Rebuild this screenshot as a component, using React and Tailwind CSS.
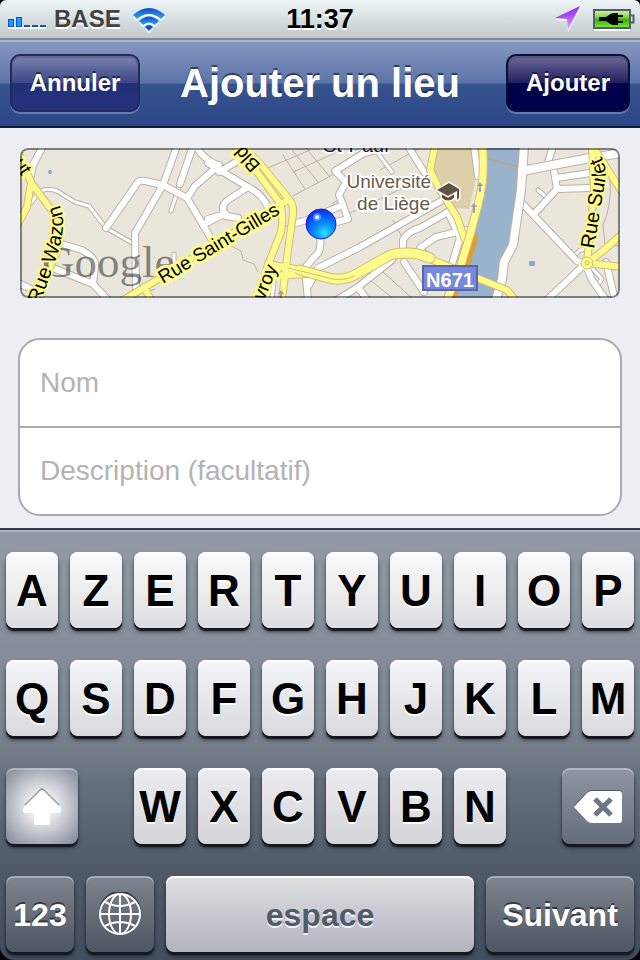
import React from "react";

const WIDE_ROADS = [
  "M43 146 L33 165 L30 180",
  "M106 228 L138 182 Q139 180 145 181 L163 185 L187 198 L212 240",
  "M177 146 L163 185 L135 233 L136 290",
  "M193 146 L180 184",
  "M196 146 Q202 158 217 165",
  "M219 165 L195 186 L187 198",
  "M203 225 L222 215",
  "M62 244 L82 250 Q96 258 95 266 L93 284",
  "M53 268 L93 284 L108 300",
  "M18 283 L42 294",
  "M208 163 L248 187 Q266 196 270 214",
  "M248 187 L228 200 Q219 207 226 216 L238 218",
  "M226 214 L208 219",
  "M243 158 L219 172",
  "M293 224 L307 220 L343 205 L348 219 L333 223",
  "M343 205 L339 195 L346 182 L335 171 L364 153 L385 148",
  "M320 238 Q322 252 314 257 L305 268 L308 300",
  "M309 285 L318 268 L360 247 L420 213 L448 197",
  "M403 255 L403 240 Q408 231 420 228 L448 212",
  "M392 260 L358 287 L337 300",
  "M404 262 L424 292",
  "M358 287 L367 300",
  "M408 146 L424 172",
  "M420 248 L436 237 L465 230",
  "M448 212 L460 238 L452 264",
  "M420 250 L430 258",
  "M474 146 L478 176",
  "M553 165 L557 189 L535 213",
  "M557 178 L590 173",
  "M557 189 L590 188",
  "M553 146 L547 166",
  "M520 201 L577 261 L588 264",
  "M585 264 L547 300",
  "M586 266 L592 280 L606 300",
  "M606 262 L615 300",
];

const THIN_ROADS = [
  "M22 214 L37 195 Q44 186 57 191 L75 202 L89 206 L106 228 L134 244",
  "M180 184 L171 211",
  "M538 190 L545 196",
  "M374 148 L392 172",
  "M272 298 L274 282",
  "M174 254 L174 266",
  "M590 266 L602 279 L596 287",
  "M573 257 L580 250 L588 249",
];

const PATHS = [
  "M293 196 L338 172",
  "M283 155 L305 189",
  "M292 150 L318 182",
  "M306 148 L329 176",
  "M268 168 L310 150",
  "M293 172 L346 148",
  "M333 203 L342 198",
  "M348 214 L420 180",
  "M370 280 L395 300",
  "M383 272 L413 299",
  "M393 220 L402 237",
  "M231 246 L241 251 L243 260 L254 264 L258 272",
  "M380 170 L420 148",
  "M283 227 L294 224",
  "M610 180 Q612 205 603 225 L605 245 L620 246",
  "M150 291 L155 289",
];

const YELLOW_ROADS = [
  "M16 148 L32 184 L53 212 Q64 230 57 252 L35 300",
  "M31 183 L27 207 L18 224",
  "M123 300 L147 286 L215 244 L288 200",
  "M144 287 L151 300",
  "M235 146 L257 172 L280 203 Q284 215 281 232 L268 265 L256 300",
  "M246 150 L262 166 L288 198 Q294 204 293 214 L288 250 L282 300",
  "M268 264 L300 270",
  "M268 276 L308 274",
  "M435 146 L430 170 L440 190 L457 217 L465 240",
  "M418 254 L440 263 L477 278 L507 290 L515 300",
  "M592 146 L594 190 L587 263",
  "M594 148 L622 192",
  "M587 263 L604 250 L622 234",
  "M587 263 L622 267",
];

function Roads({ list, casing, fill, outer, inner }) {
  return (
    <>
      <g stroke={casing} strokeWidth={outer}>
        {list.map((d) => <path key={d} d={d} />)}
      </g>
      <g stroke={fill} strokeWidth={inner}>
        {list.map((d) => <path key={d} d={d} />)}
      </g>
    </>
  );
}

function StreetMap() {
  return (
    <svg
      viewBox="20 148 600 150"
      preserveAspectRatio="xMidYMid slice"
      className="block h-full w-full"
      role="img"
      aria-label="Carte du quartier"
      fontFamily='"Liberation Sans", Arial, sans-serif'
    >
      <defs>
        <radialGradient id="pin" cx="0.62" cy="0.8" r="0.75">
          <stop offset="0" stopColor="#2fe6ff" />
          <stop offset="0.35" stopColor="#0a9cff" />
          <stop offset="0.75" stopColor="#0560ff" />
          <stop offset="1" stopColor="#0838ea" />
        </radialGradient>
        <path id="wazon" d="M38 310 L56 259 Q66 230 62 212 L55 190" />
        <path id="surlet" d="M594 249 L602 200 L606 176 Q606 164 598 150 L590 136" />
      </defs>
      <rect x="20" y="148" width="600" height="150" fill="#eae6dc" />
      <path d="M435 148 H474 L477 174 L469 209 L455 208 L438 180 L428 173Z" fill="#dccfa9" />
      <path d="M485 148 H522 L520 180 L515 215 L506 258 L497 298 H449 L473 237 L487 180Z" fill="#99b3cc" />
      <path d="M487 158 L521 168" stroke="#b3a696" strokeWidth="2" />
      <g fill="none" strokeLinejoin="round" strokeLinecap="round">
        <g stroke="#bcb1a4" strokeWidth="1">
          {PATHS.map((d) => <path key={d} d={d} />)}
        </g>
        <Roads list={THIN_ROADS} casing="#bcb1a2" fill="#ffffff" outer={5} inner={3} />
        <Roads list={WIDE_ROADS} casing="#bcb1a2" fill="#ffffff" outer={8} inner={6} />
        <Roads
          list={["M524 146 L521 190 L513 245 L504 262 L502 280 L496 300", "M522 171 L553 165 L590 158 L622 153"]}
          casing="#bcb1a2"
          fill="#ffffff"
          outer={10}
          inner={8}
        />
        <Roads list={YELLOW_ROADS} casing="#d3bd75" fill="#fffa8c" outer={8} inner={6} />
        <Roads
          list={["M300 270 L325 277 Q343 283 360 272 L385 258 Q395 251 418 254 L430 258"]}
          casing="#d3bd75"
          fill="#fffa8c"
          outer={11}
          inner={9}
        />
        <path d="M268 265 L300 270 L308 273" stroke="#fffa8c" strokeWidth="6" />
        <path d="M288 268 L325 277 Q340 283 354 276" stroke="#d3bd75" strokeWidth="1" />
        <path d="M473 238 L463 270 L450 300" stroke="#de9d2c" strokeWidth="10" />
        <Roads
          list={["M482 144 Q486 175 478 205 L470 235 L460 268 L446 302"]}
          casing="#d3bd75"
          fill="#fffa8c"
          outer={9}
          inner={7}
        />
      </g>
      <circle cx="587" cy="263" r="6" fill="#fffa8c" stroke="#d3bd75" />
      <circle cx="587" cy="263" r="2" fill="none" stroke="#c9b46a" />
      <circle cx="50" cy="172" r="2" fill="#8faacb" />
      <rect x="529" y="261" width="6" height="5" fill="#8faacb" />
      <g fill="#a19bb5">
        <path d="M480 182 l3 4 h-2 v6 h-2 v-6 h-2Z" />
        <path d="M474 203 l3 4 h-2 v6 h-2 v-6 h-2Z" />
        <path d="M281 290 l3 4 h-2 v5 h-2 v-5 h-2Z" />
      </g>
      <text x="42" y="277" fontSize="45" fill="#000000" fillOpacity="0.45" fontFamily='"Liberation Serif", serif'>
        Google
      </text>
      <g fontSize="19" fill="#000000" stroke="#fffa8c" strokeWidth="6" strokeLinejoin="round" paintOrder="stroke">
        <text fontSize="20" strokeWidth="4"><textPath href="#wazon" startOffset="6">Rue Wazon</textPath></text>
        <text transform="translate(163 284) rotate(-31)">Rue Saint-Gilles</text>
        <text fontSize="20" strokeWidth="4"><textPath href="#surlet">Rue Surlet</textPath></text>
        <text transform="translate(261 165) rotate(-132)">Bld</text>
        <text transform="translate(264 301) rotate(-68)">vroy</text>
        <text transform="translate(13 163) rotate(57)">ut</text>
      </g>
      <g fontSize="19" fill="#6a5b4b" stroke="#ffffff" strokeWidth="4" strokeLinejoin="round" paintOrder="stroke">
        <text x="431" y="188" textAnchor="end">Université</text>
        <text x="430" y="210" textAnchor="end">de Liège</text>
      </g>
      <text x="323" y="152" fontSize="20" fill="#222222" stroke="#ffffff" strokeWidth="4" paintOrder="stroke">St-Paul</text>
      <g fill="#5f5243" stroke="#ffffff" strokeWidth="3" strokeLinejoin="round" paintOrder="stroke">
        <path d="M442 193 V198 Q448 203 454 198 V192 L448 196Z" />
        <path d="M437 190 L449 183 L459 189 V198 L457 200 V191 L448 196Z" />
      </g>
      <rect x="423" y="266" width="54" height="24" fill="#7788dd" stroke="#5966a9" strokeWidth="2" />
      <text x="450" y="287" textAnchor="middle" fontSize="20" fontWeight="bold" fill="#ffffff">N671</text>
      <circle cx="321" cy="224" r="15" fill="url(#pin)" stroke="#2218d8" strokeWidth="1" />
      <circle cx="317" cy="217" r="4" fill="#ffffff" fillOpacity="0.3" />
      <circle cx="317" cy="217" r="2" fill="#ffffff" fillOpacity="0.9" />
    </svg>
  );
}

function StatusBar() {
  return (
    <header className="grid h-10 grid-cols-3 items-center rounded-t-md border-b-2 border-[#7f8b8c] bg-linear-to-b from-[#eef6f9] to-[#c3c9ca] px-2">
      <div className="flex items-center gap-2">
        <svg width="38" height="22" viewBox="0 0 38 22" className="shrink-0" role="img" aria-label="Signal">
          <path d="M0 19H38V21H0Z" fill="#ffffff" />
          <g fill="#1f9cfb" stroke="#0b55c4" strokeWidth="1">
            <rect x="0.5" y="11.5" width="5" height="7" />
            <rect x="8.5" y="9.5" width="5" height="9" />
          </g>
          <path d="M16 17H22V19H16ZM24 17H30V19H24ZM32 17H38V19H32Z" fill="#1450c8" />
        </svg>
        <span className="text-2xl leading-7 font-bold text-[#414141] [text-shadow:0_2px_0_#ffffff]">BASE</span>
        <svg width="32" height="30" viewBox="0 -4 32 30" className="ml-1 shrink-0" role="img" aria-label="Wi-Fi">
          <defs>
            <linearGradient id="wifi" x1="0" y1="0" x2="0" y2="1">
              <stop offset="0" stopColor="#0b4fc4" />
              <stop offset="1" stopColor="#2fa8f8" />
            </linearGradient>
          </defs>
          <g fill="#ffffff" transform="translate(0 2)">
            <path d="M0 7 Q16 -7 32 7 L28 11 Q16 1 4 11Z" />
            <path d="M6 13 Q16 4 26 13 L22 17 Q16 12 10 17Z" />
            <path d="M12 19 Q16 15 20 19 L16 23Z" />
          </g>
          <g fill="url(#wifi)">
            <path d="M0 7 Q16 -7 32 7 L28 11 Q16 1 4 11Z" />
            <path d="M6 13 Q16 4 26 13 L22 17 Q16 12 10 17Z" />
            <path d="M12 19 Q16 15 20 19 L16 23Z" fill="#0b4fd0" />
          </g>
        </svg>
      </div>
      <time className="text-center text-[27px] leading-8 font-bold text-black [text-shadow:0_2px_0_#ffffff]">11:37</time>
      <div className="flex items-center justify-end gap-3">
        <svg width="26" height="26" viewBox="0 0 26 26" role="img" aria-label="Localisation">
          <defs>
            <linearGradient id="arrow" x1="0" y1="0" x2="0.3" y2="1">
              <stop offset="0" stopColor="#6a0fd8" />
              <stop offset="0.5" stopColor="#a94cf5" />
              <stop offset="1" stopColor="#dd9cff" />
            </linearGradient>
          </defs>
          <path d="M25 2 L0 14 L12 15 L13 26Z" fill="#ffffff" />
          <path d="M25 0 L0 12 L12 13 L13 24Z" fill="url(#arrow)" />
        </svg>
        <svg width="42" height="23" viewBox="1 0 42 23" className="-mr-[3px]" role="img" aria-label="Batterie en charge">
          <defs>
            <linearGradient id="battery" x1="0" y1="0" x2="0" y2="1">
              <stop offset="0" stopColor="#d6f5b5" />
              <stop offset="0.4" stopColor="#7fd63c" />
              <stop offset="0.55" stopColor="#3aa80a" />
              <stop offset="1" stopColor="#7cf23c" />
            </linearGradient>
          </defs>
          <path d="M2 21H38V23H2Z" fill="#ffffff" />
          <rect x="2" y="2" width="36" height="18" fill="url(#battery)" stroke="#555c6a" strokeWidth="2" />
          <path d="M39 7.5H41.5V14.5H39" fill="#dfe4e8" stroke="#555c6a" strokeWidth="2" />
          <path d="M7 9H14L17 7Q19 5 22 5H26V7H31V9H26V13H31V15H26V17H22Q19 17 17 15L14 13H7Z" fill="#000000" />
        </svg>
      </div>
    </header>
  );
}

const NAV_BUTTON =
  "h-[58px] rounded-[10px] border-2 text-2xl font-bold text-white [text-shadow:0_-2px_0_rgba(0,0,0,0.5)] shadow-[0_2px_0_rgba(140,160,205,0.6),inset_0_2px_1px_rgba(0,0,0,0.2)]";

function NavBar() {
  return (
    <nav className="grid h-22 grid-cols-[1fr_auto_1fr] items-center border-t-2 border-b-2 border-t-[#aab8d4] border-b-[#131b3c] bg-[linear-gradient(#8796c0_0%,#5b74a8_49%,#37548f_50%,#2c4587_100%)] px-[10px] pb-[2px]">
      <button
        type="button"
        className={`${NAV_BUTTON} w-[130px] justify-self-start border-[#232c58] bg-[linear-gradient(#7c84b0_0%,#3a4584_50%,#22307a_51%,#25337c_100%)]`}
      >
        Annuler
      </button>
      <h1 className="text-[40px] leading-12 font-bold text-white [text-shadow:0_-2px_0_rgba(0,0,0,0.5)]">Ajouter un lieu</h1>
      <button
        type="button"
        className={`${NAV_BUTTON} w-[124px] justify-self-end border-[#0b0c3a] bg-[linear-gradient(#6d6a98_0%,#211e60_50%,#00004b_51%,#00004b_100%)]`}
      >
        Ajouter
      </button>
    </nav>
  );
}

const KEY =
  "flex h-19 items-center justify-center rounded-lg pt-[2px] font-bold";
const DARK_KEY = `${KEY} text-[32px] text-white [text-shadow:0_-2px_0_rgba(0,0,0,0.5)] shadow-[0_3px_1px_#15181d,0_4px_4px_rgba(0,0,0,0.5),inset_0_2px_0_rgba(200,210,218,0.55)]`;
const LIGHT_SHADOW =
  "shadow-[0_3px_1px_#15181d,0_4px_4px_rgba(0,0,0,0.5),inset_0_2px_0_#ffffff]";

function LetterKeys({ letters, tone }) {
  return letters.split("").map((letter) => (
    <button
      type="button"
      key={letter}
      className={`${KEY} ${LIGHT_SHADOW} ${tone} min-w-0 flex-1 text-[44px] text-black [text-shadow:0_2px_0_#ffffff]`}
    >
      {letter}
    </button>
  ));
}

function Keyboard() {
  return (
    <section
      aria-label="Clavier"
      className="flex flex-1 flex-col gap-8 rounded-b-[14px] border-t-2 border-[#363b45] bg-[linear-gradient(#929aa6_0%,#7f8593_45%,#67717e_58%,#4f5966_80%,#434d5e_100%)] px-[6px] pt-[22px] pb-2 shadow-[inset_0_2px_0_#a9b4bf]"
    >
      <div className="flex gap-3">
        <LetterKeys letters="AZERTYUIOP" tone="bg-linear-to-b from-[#fbfbfb] to-[#dddee1]" />
      </div>
      <div className="flex gap-3">
        <LetterKeys letters="QSDFGHJKLM" tone="bg-linear-to-b from-[#f4f5f8] to-[#d9dadd]" />
      </div>
      <div className="flex gap-3">
        <button
          type="button"
          aria-label="Majuscule"
          className={`${DARK_KEY} mr-11 w-18 bg-[radial-gradient(circle_at_50%_50%,#ffffff_0%,#e4e6ea_30%,#b4b8c2_62%,#7d8594_100%)]`}
        >
          <svg width="40" height="38" viewBox="0 1 40 38" aria-hidden="true">
            <path d="M18 2 Q20 0 22 2 L38 18 L20 22 L2 18Z" fill="#989da8" />
            <path d="M18 4 Q20 2 22 4 L38 20 Q41 26 36 26 H28 V36 Q28 38 26 38 H14 Q12 38 12 36 V26 H4 Q-1 26 2 20Z" fill="#ffffff" />
          </svg>
        </button>
        <LetterKeys letters="WXCVBN" tone="bg-linear-to-b from-[#ededf0] to-[#d4d5d9]" />
        <button
          type="button"
          aria-label="Effacer"
          className={`${DARK_KEY} ml-11 w-18 bg-linear-to-b from-[#9097a3] to-[#646b7c]`}
        >
          <svg width="48" height="34" viewBox="0 0 48 34" aria-hidden="true">
            <path d="M0 16 L13 2 Q15 0 18 0 H45 Q48 0 48 3 V16Z" fill="#50576a" />
            <path d="M0 17 L13 3 Q15 1 18 1 H45 Q48 1 48 4 V30 Q48 33 45 33 H18 Q15 33 13 31Z" fill="#ffffff" />
            <path d="M21 9 L37 25 M37 9 L21 25" stroke="#6e7587" strokeWidth="5" />
          </svg>
        </button>
      </div>
      <div className="flex gap-3">
        <button type="button" className={`${DARK_KEY} w-17 bg-linear-to-b from-[#7f8591] to-[#4c5662]`}>
          123
        </button>
        <button
          type="button"
          aria-label="Langue du clavier"
          className={`${DARK_KEY} w-17 bg-linear-to-b from-[#7f8591] to-[#4c5662]`}
        >
          <svg width="42" height="46" viewBox="0 0 42 46" fill="none" strokeWidth="2" aria-hidden="true">
            <path d="M1 20 A20 20 0 0 1 41 20" stroke="#333a45" />
            <g stroke="#ffffff">
              <circle cx="21" cy="22" r="20" />
              <ellipse cx="21" cy="22" rx="11" ry="20" />
              <path d="M21 2 V42 M1 22 H41 M6 10 Q21 18 36 10 M6 34 Q21 26 36 34" />
            </g>
          </svg>
        </button>
        <button
          type="button"
          className={`${KEY} ${LIGHT_SHADOW} flex-1 bg-linear-to-b from-[#dfe0e3] to-[#b2b5bf] text-[32px] text-[#515b69] [text-shadow:0_2px_0_rgba(255,255,255,0.8)]`}
        >
          espace
        </button>
        <button type="button" className={`${DARK_KEY} w-37 bg-linear-to-b from-[#7f8591] to-[#4c5662]`}>
          Suivant
        </button>
      </div>
    </section>
  );
}

const FIELD =
  "block h-[86px] w-full bg-transparent px-5 text-[28px] text-black outline-none placeholder:text-[#b3b3b3]";

export default function App() {
  return (
    <div className="flex min-h-screen flex-col bg-black font-['Liberation_Sans',Arial,sans-serif]">
      <StatusBar />
      <NavBar />
      <main className="bg-[#edeef4] px-[18px] pt-5 pb-3">
        <div className="relative mx-[2px] mb-10 h-[150px] overflow-hidden rounded-lg">
          <StreetMap />
          <div className="pointer-events-none absolute inset-0 rounded-lg border-2 border-black/45" />
        </div>
        <form className="overflow-hidden rounded-[22px] border-2 border-[#a9abad] bg-white">
          <input className={FIELD} type="text" aria-label="Nom" placeholder="Nom" />
          <div className="h-[2px] bg-[#a9abad]" />
          <input className={FIELD} type="text" aria-label="Description" placeholder="Description (facultatif)" />
        </form>
      </main>
      <Keyboard />
    </div>
  );
}
